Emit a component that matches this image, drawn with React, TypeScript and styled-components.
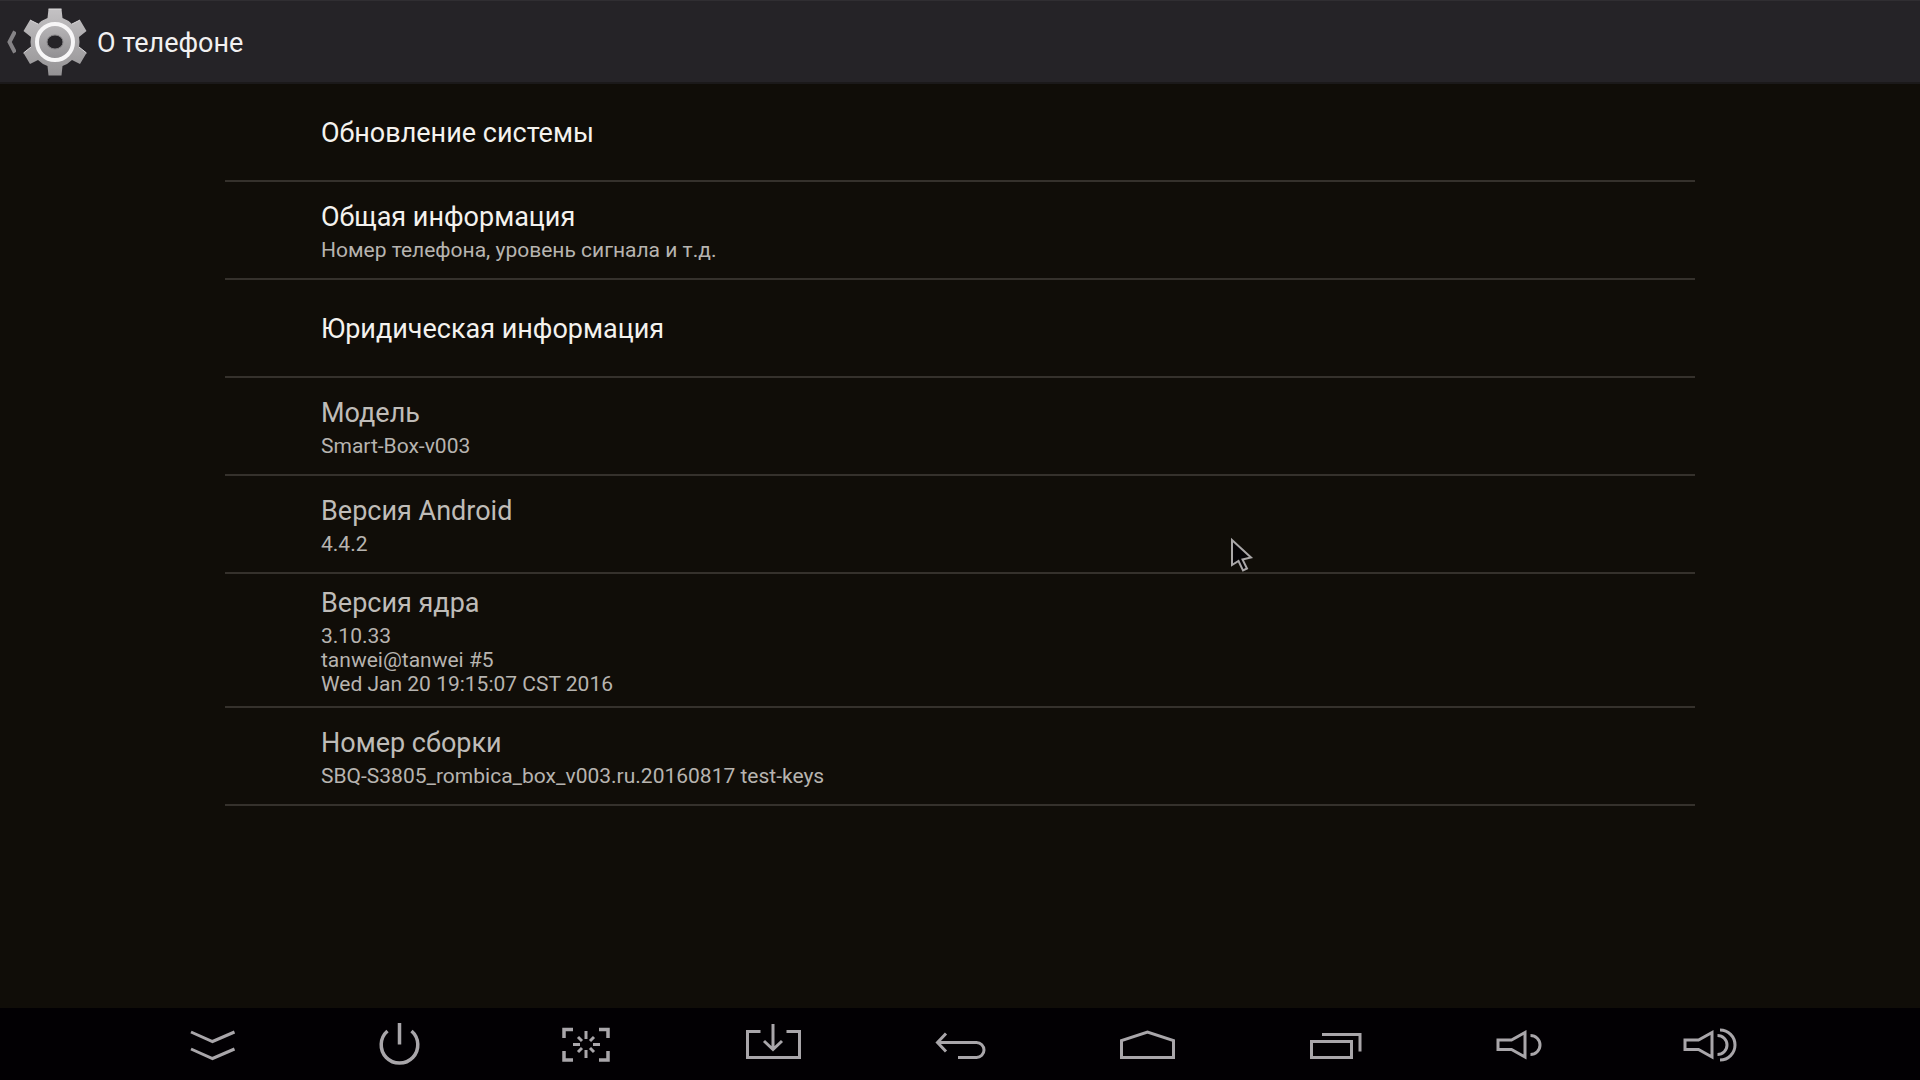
import React from "react";
import styled, { createGlobalStyle, css } from "styled-components";

const GlobalStyle = createGlobalStyle`
  *, *::before, *::after { box-sizing: border-box; }
  body {
    margin: 0;
    background: #100d08;
    font-family: Roboto, "Noto Sans", sans-serif;
  }
`;

const Screen = styled.div`
  position: relative;
  display: flex;
  flex-direction: column;
  min-height: 100vh;
  overflow: hidden;
  background: #100d08;
`;

const plainButton = css`
  appearance: none;
  margin: 0;
  padding: 0;
  border: 0;
  background: none;
  color: inherit;
  font: inherit;
  cursor: default;
`;

const ActionBar = styled.header`
  display: flex;
  align-items: center;
  height: 84px;
  padding-left: 6px;
  background: #252327;
  border-top: 1px solid #302e32;
  border-bottom: 2px solid #1b191a;
`;

const UpButton = styled.button`
  ${plainButton}
  display: flex;
  align-items: center;
  gap: 6px;
`;

const Heading = styled.h1`
  margin: 0 0 0 9px;
  padding-top: 2px;
  color: #f1f0f1;
  font-size: 27px;
  font-weight: 400;
  line-height: 40px;
`;

const Content = styled.main`
  flex: 1;
  padding: 0 225px;
`;

const List = styled.ul`
  margin: 0;
  padding: 0;
  list-style: none;
`;

const Item = styled.li`
  display: flex;
  min-height: 98px;
  border-bottom: 2px solid #35312c;
`;

const rowLayout = css`
  flex: 1;
  display: flex;
  flex-direction: column;
  align-items: flex-start;
  justify-content: center;
  padding: 9px 96px 7px;
  text-align: left;
`;

const LinkRow = styled.button`
  ${plainButton}
  ${rowLayout}
`;

const InfoRow = styled.div`
  ${rowLayout}
`;

const Title = styled.span<{ $active?: boolean }>`
  color: ${(p) => (p.$active ? "#f4f2ee" : "#bfbcb8")};
  font-size: 27px;
  line-height: 40px;
`;

const Summary = styled.span`
  margin: 1px 0 3px;
  color: #b7b4b0;
  font-size: 21px;
  line-height: 24px;
  white-space: pre-line;
`;

const NavBar = styled.nav`
  display: flex;
  height: 72px;
  padding: 0 119px;
  background: #020003;
`;

const NavButton = styled.button`
  ${plainButton}
  flex: 1;
  display: flex;
  align-items: center;
  justify-content: center;
`;

const NavIcon = styled.svg`
  flex: none;
  width: 72px;
  height: 72px;
  fill: none;
  stroke: #a9a6aa;
  stroke-width: 3;
`;

const Pointer = styled.svg`
  position: absolute;
  left: 1229px;
  top: 536px;
  width: 26px;
  height: 38px;
  pointer-events: none;
`;

function Gear() {
  return (
    <svg width="66" height="70" viewBox="-33 -35 66 70" aria-hidden="true">
      <defs>
        <linearGradient id="metal" x1="0" y1="0" x2="0" y2="1">
          <stop offset="0" stopColor="#c4c2c4" />
          <stop offset="1" stopColor="#949294" />
        </linearGradient>
        <linearGradient id="hub" x1="0" y1="0" x2="0" y2="1">
          <stop offset="0" stopColor="#b9b7b9" />
          <stop offset="1" stopColor="#8f8d90" />
        </linearGradient>
      </defs>
      <path
        fill="url(#metal)"
        d="M-6.500-33H6.500L7.500-24Q13-22 17-18L25-22L31.500-11L24-5Q25 0 24 5L31.500 11L25 22L17 18Q13 22 7.500 24L6.500 33.500H-6.500L-7.500 24Q-13 22-17 18L-25 22L-31.500 11L-24 5Q-25 0-24-5L-31.500-11L-25-22L-17-18Q-13-22-7.500-24Z"
      />
      <path d="M-6.500-33H6.500M-25-22L-17-18M25-22L17-18M-31.500 11L-24 5M31.500 11L24 5" stroke="#dddbdd" strokeWidth="1" />
      <circle r="18" fill="url(#hub)" stroke="#f7f6f7" strokeWidth="4" />
      <ellipse rx="8" ry="7" fill="#252327" stroke="#858386" strokeWidth="1" />
    </svg>
  );
}

const entries = [
  { title: "Обновление системы", active: true },
  { title: "Общая информация", summary: "Номер телефона, уровень сигнала и т.д.", active: true },
  { title: "Юридическая информация", active: true },
  { title: "Модель", summary: "Smart-Box-v003" },
  { title: "Версия Android", summary: "4.4.2" },
  { title: "Версия ядра", summary: "3.10.33\ntanwei@tanwei #5\nWed Jan 20 19:15:07 CST 2016" },
  { title: "Номер сборки", summary: "SBQ-S3805_rombica_box_v003.ru.20160817 test-keys" },
];

const navItems = [
  { label: "Скрыть панель", art: <path d="M15 24L36.500 33.500L58.500 24M15 41L36.500 50.500L58.500 41" /> },
  { label: "Питание", art: <path d="M36.500 15V36.500M24.500 23A18.300 18.300 0 1 0 48.500 23" strokeWidth="3.500" /> },
  {
    label: "Снимок экрана",
    art: (
      <>
        <path d="M14 30V21.500H23M49 21.500H58V30M58 43V52H49M23 52H14V43" strokeWidth="3.500" />
        <path d="M36 23V31M36 42V50M23 36.500H30M43 36.500H50M28 29L32 33M44 29L40 33M28 44L32 40M44 44L40 40" />
      </>
    ),
  },
  { label: "Загрузки", art: <path d="M23.500 23.500H10.500V49.500H62.500V23.500H49.500M36 16V41M27 33L36 41.500L45 33" /> },
  { label: "Назад", art: <path d="M22 25.500L13.500 34.500L22 43.500M14 34.500H52.500A7.500 7.500 0 0 1 52.500 49.500H34" /> },
  { label: "Домой", art: <path d="M10.500 49.500V32.500L36.500 24L62.500 32.500V49.500Z" /> },
  { label: "Недавние", art: <path d="M13.500 33.500H53.500V49.500H13.500ZM24 26.500H62V43.500" /> },
  {
    label: "Тише",
    art: <path d="M13 32H26.500L40 24.500V49L26.500 41.500H13ZM45.500 27.500A9.500 9.500 0 0 1 45.500 46.500" />,
  },
  {
    label: "Громче",
    art: (
      <path d="M13 32H26.500L40 24.500V49L26.500 41.500H13ZM45.500 27.500A9.500 9.500 0 0 1 45.500 46.500M48 22A15 15 0 0 1 48 52" />
    ),
  },
];

export default function App() {
  return (
    <>
      <GlobalStyle />
      <Screen>
        <ActionBar>
          <UpButton aria-label="Назад к настройкам">
            <svg width="10" height="24" viewBox="0 0 10 24" fill="none" stroke="#858386" strokeWidth="4" aria-hidden="true">
              <path d="M9 1.500L3.500 12L9 22.500" />
            </svg>
            <Gear />
          </UpButton>
          <Heading>О телефоне</Heading>
        </ActionBar>
        <Content>
          <List>
            {entries.map((entry) => {
              const Row = entry.active ? LinkRow : InfoRow;
              return (
                <Item key={entry.title}>
                  <Row>
                    <Title $active={entry.active}>{entry.title}</Title>
                    {entry.summary && <Summary>{entry.summary}</Summary>}
                  </Row>
                </Item>
              );
            })}
          </List>
        </Content>
        <NavBar>
          {navItems.map((item) => (
            <NavButton key={item.label} aria-label={item.label}>
              <NavIcon viewBox="0 0 72 72" aria-hidden="true">
                {item.art}
              </NavIcon>
            </NavButton>
          ))}
        </NavBar>
        <Pointer viewBox="0 0 26 38" aria-hidden="true">
          <path d="M3 4V29L9.500 25L14 34.500L18 32.500L13.500 23.500L22 21.500Z" fill="#050306" stroke="#aaa7a8" strokeWidth="2" />
        </Pointer>
      </Screen>
    </>
  );
}
